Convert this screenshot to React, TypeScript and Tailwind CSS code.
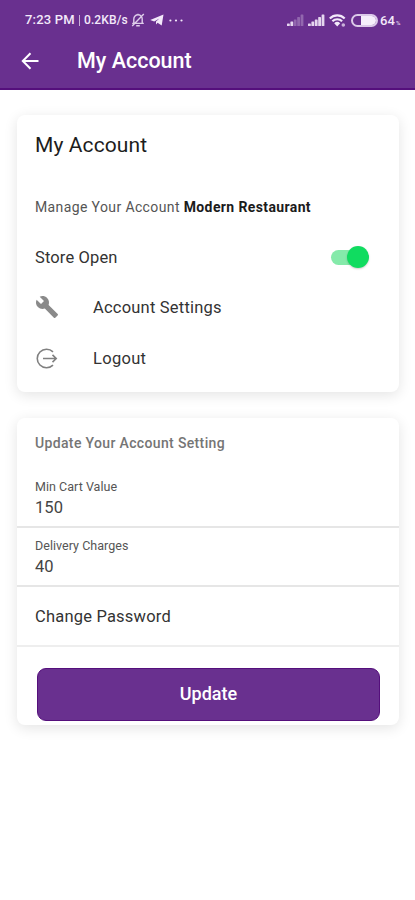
import React from 'react';
import { MdBuild } from 'react-icons/md';

function SignalBars({ active, className }: { active: number; className: string }) {
  return (
    <svg viewBox="0 0 17 12" className={className} fill="currentColor">
      {[2.5, 4.5, 6.5, 9, 11.5].map((h, i) => (
        <rect key={h} x={i * 3.4} y={12 - h} width="2.8" height={h} rx="0.6" opacity={i < active ? 0.9 : 0.3} />
      ))}
    </svg>
  );
}

function StatusBar() {
  return (
    <div className="h-[38px] pl-[25px] pr-[14px] pt-[2px] flex items-center text-[#f3e9fa]">
      <span className="w-[50px] shrink-0 whitespace-nowrap text-[13px] font-medium tracking-[0.2px]">7:23 PM</span>
      <span className="ml-[4px] w-px h-[11px] bg-[#f3e9fa]/70" />
      <span className="ml-[4px] w-[45px] shrink-0 whitespace-nowrap text-[12px] font-medium tracking-[0.1px]">0.2KB/s</span>
      {/* Muted bell */}
      <svg viewBox="0 0 14 14" className="ml-[2px] w-[14px] h-[14px]" fill="none" stroke="currentColor" strokeWidth="1.4">
        <path d="M2.8 10V6a4.2 4.2 0 0 1 8.4 0v4M1.2 10.4h11.6M5.2 12.8h3.6M7 .7V2M12.8 1 1.2 13" opacity=".85" />
      </svg>
      {/* Telegram plane */}
      <svg viewBox="0 0 14 12" className="ml-[5px] w-[14px] h-[12px]" fill="currentColor">
        <path d="M13.5.4.2 6l4 1.4L9.4 4.4 6 7.6v2.8l1.6-1.6 4.1 2.6z" />
      </svg>
      <svg viewBox="0 0 14 3" className="ml-[5px] w-[14px] h-[3px]" fill="currentColor">
        <circle cx="1.4" cy="1.5" r="1.1" />
        <circle cx="7" cy="1.5" r="1.1" />
        <circle cx="12.5" cy="1.5" r="1.1" />
      </svg>
      <div className="ml-auto flex items-center">
        <SignalBars active={2} className="w-[17px] h-[12px]" />
        <SignalBars active={5} className="ml-[4px] w-[17px] h-[12px]" />
        <svg viewBox="0 0 17 13" className="ml-[4px] w-[17px] h-[13px]" fill="none" stroke="currentColor" strokeWidth="2.1">
          <path d="M.8 4.5a10.5 10.5 0 0 1 14.9 0M3.4 7.3a6.6 6.6 0 0 1 9.7 0" />
          <path d="m8.2 12.5-3-3.2a4.3 4.3 0 0 1 6 0z" fill="currentColor" stroke="none" />
          <circle cx="14.3" cy="11" r="1.8" fill="currentColor" stroke="none" opacity=".7" />
        </svg>
        <div className="ml-[5px] w-[27px] h-[13px] rounded-full border-2 border-[#dccae9] flex justify-end">
          <div className="w-[15px] h-full rounded-r-full bg-[#f6effb]" />
        </div>
        <span className="ml-[2px] w-[15px] text-[13px] font-medium leading-none">64</span>
        <span className="ml-[1px] w-[5px] text-[6px] leading-none pt-[5px]">%</span>
      </div>
    </div>
  );
}

function Header() {
  return (
    <header className="h-[90px] bg-[#69308f] border-b-2 border-[#550f7c] text-white">
      <StatusBar />
      <div className="h-[46px] pl-[21px] flex items-center">
        <svg viewBox="0 0 18 18" className="w-[18px] h-[18px]" fill="none" stroke="currentColor" strokeWidth="2">
          <path d="M17.5 9H2M9.5 1.3 1.8 9l7.7 7.7" />
        </svg>
        <h1 className="ml-[38px] text-[21.5px] font-medium leading-none">My Account</h1>
      </div>
    </header>
  );
}

function AccountCard() {
  return (
    <section className="mt-[25px] h-[277px] rounded-[8px] bg-white px-[18px] shadow-[0_3px_14px_rgba(0,0,0,0.11)]">
      <h2 className="h-[60px] pt-[2px] flex items-center text-[21px] tracking-[0.1px] text-[#1c1c1c]">My Account</h2>
      <p className="h-[63px] pt-[2px] flex items-center text-[14px] tracking-[0.38px] text-[#555] whitespace-pre">
        Manage Your Account <span className="font-bold text-[#1b1b1b]">Modern Restaurant</span>
      </p>
      <div className="h-[38px] flex items-center justify-between pr-[12px]">
        <span className="pt-[2px] text-[16.5px] tracking-[0.14px] text-[#333]">Store Open</span>
        <button className="relative w-[38px] h-[22px] flex items-center" aria-label="Store Open">
          <span className="w-[34px] h-[15px] rounded-full bg-[#85eaaa]" />
          <span className="absolute right-0 top-0 w-[22px] h-[22px] rounded-full bg-[#10dc60] shadow-[0_1px_2px_rgba(0,0,0,0.2)]" />
        </button>
      </div>
      <div className="h-[63px] flex items-center">
        <MdBuild className="-mt-[2px] w-[24px] h-[24px] text-[#8a8a8a]" />
        <span className="ml-[34px] pt-[2px] text-[16.5px] tracking-[0.21px] text-[#333]">Account Settings</span>
      </div>
      <div className="h-[39px] flex items-center">
        <svg viewBox="0 0 24 24" className="w-[24px] h-[24px]" fill="none" stroke="#808080" strokeWidth="1.6">
          <path d="M18 4.8A9.3 9.3 0 1 0 18 18.2M8 11.5h13M17.5 7.9l3.7 3.6-3.7 3.6" />
        </svg>
        <span className="ml-[34px] pt-[2px] text-[16.5px] tracking-[0.3px] text-[#333]">Logout</span>
      </div>
    </section>
  );
}

function Field({ label, value }: { label: string; value: string }) {
  return (
    <div className="px-[18px] pb-[6px] border-b-2 border-[#e6e6e6]">
      <label className="block h-[17px] text-[12.5px] leading-[17px] tracking-[0.03px] text-[#555]">{label}</label>
      <div className="h-[25px] text-[16.5px] leading-[25px] tracking-[0.1px] text-[#444]">{value}</div>
    </div>
  );
}

function SettingsCard() {
  return (
    <section className="mt-[26px] h-[307px] rounded-[8px] bg-white shadow-[0_3px_14px_rgba(0,0,0,0.11)]">
      <h3 className="h-[60px] px-[18px] pb-[9px] flex items-center text-[14px] font-medium tracking-[0.35px] text-[#757575]">
        Update Your Account Setting
      </h3>
      <Field label="Min Cart Value" value="150" />
      <div className="pt-[9px]">
        <Field label="Delivery Charges" value="40" />
      </div>
      <div className="h-[60px] px-[18px] pt-[2px] flex items-center border-b-2 border-[#eee] text-[16.5px] tracking-[0.2px] text-[#333]">
        Change Password
      </div>
      <button className="mt-[21px] mx-[20px] pb-[2px] w-[343px] h-[53px] rounded-[9px] border border-[#550f7c] bg-[#69308f] text-white text-[18px] font-medium">
        Update
      </button>
    </section>
  );
}

export default function App() {
  return (
    <div className="w-[415px] h-[900px] overflow-hidden bg-white font-['Roboto',sans-serif]">
      <Header />
      <main className="pl-[17px] pr-[16px]">
        <AccountCard />
        <SettingsCard />
      </main>
    </div>
  );
}
